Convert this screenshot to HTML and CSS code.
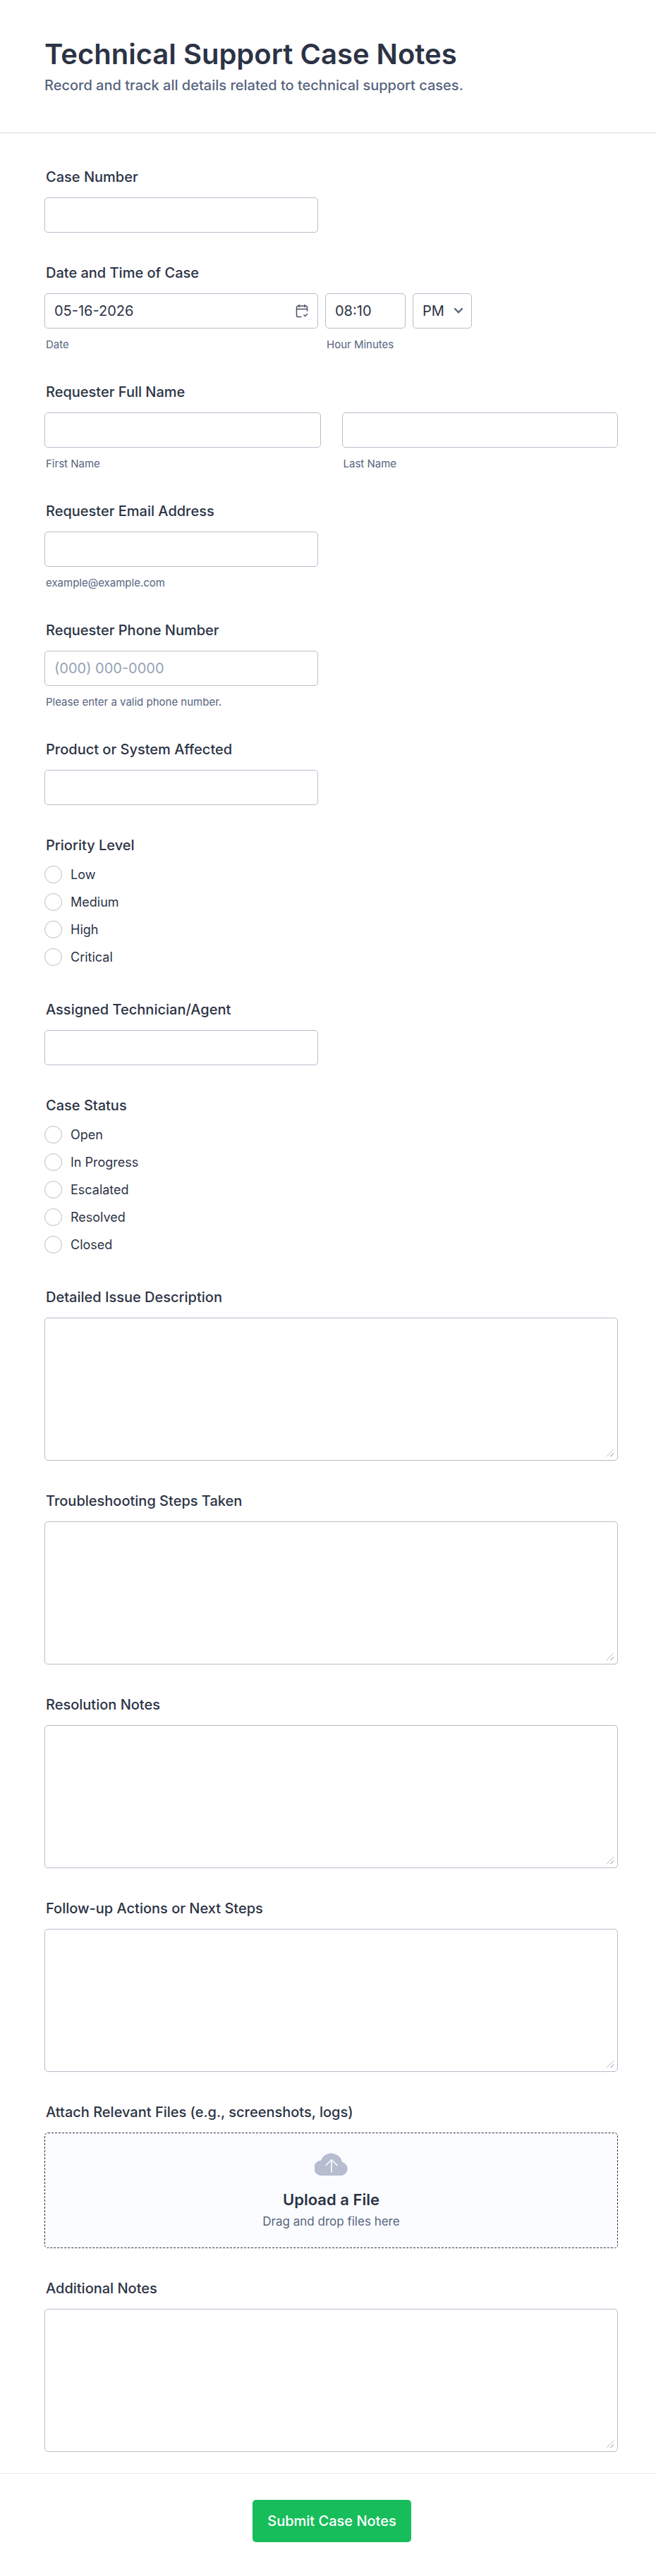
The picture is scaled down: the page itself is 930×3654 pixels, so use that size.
FILE: index.html
```html
<!DOCTYPE html>
<html lang="en">
<head>
<meta charset="utf-8">
<meta name="viewport" content="width=device-width, initial-scale=1">
<title>Technical Support Case Notes</title>
<link rel="stylesheet" href="styles.css">
</head>
<body>
<form class="form">
  <header class="form-header">
    <h1 class="form-title">Technical Support Case Notes</h1>
    <p class="form-subtitle">Record and track all details related to technical support cases.</p>
  </header>

  <main class="fields">
    <div class="field">
      <label class="label" for="case-number">Case Number</label>
      <input class="control half" id="case-number" type="text">
    </div>

    <div class="field" role="group" aria-labelledby="when">
      <span class="label" id="when">Date and Time of Case</span>
      <div class="row when-row">
        <div class="part half">
          <div class="with-icon">
            <input class="control" id="date" type="text" value="05-16-2026">
            <svg class="calendar-icon" viewBox="0 0 18 20" aria-hidden="true">
              <path d="M16.5 10.5V5a2 2 0 0 0-2-2h-11a2 2 0 0 0-2 2v11.500a2 2 0 0 0 2 2h5M1.500 7.500h15M5 1v4M13 1v4M11.500 15.500l2 2 3.500-3.500"/>
            </svg>
          </div>
          <label class="sublabel" for="date">Date</label>
        </div>
        <div class="part time">
          <input class="control" id="time" type="text" value="08:10">
          <label class="sublabel" for="time">Hour Minutes</label>
        </div>
        <div class="part ampm">
          <div class="with-icon">
            <select class="control select" aria-label="AM/PM Option">
              <option>AM</option>
              <option selected>PM</option>
            </select>
            <svg class="chevron-icon" viewBox="0 0 14 10" aria-hidden="true"><path d="M2 2l5 5 5-5"/></svg>
          </div>
        </div>
      </div>
    </div>

    <div class="field" role="group" aria-labelledby="full-name">
      <span class="label" id="full-name">Requester Full Name</span>
      <div class="row name-row">
        <div class="part">
          <input class="control" id="first" type="text">
          <label class="sublabel" for="first">First Name</label>
        </div>
        <div class="part">
          <input class="control" id="last" type="text">
          <label class="sublabel" for="last">Last Name</label>
        </div>
      </div>
    </div>

    <div class="field">
      <label class="label" for="email">Requester Email Address</label>
      <input class="control half" id="email" type="email" aria-describedby="email-hint">
      <span class="sublabel" id="email-hint">example@example.com</span>
    </div>

    <div class="field">
      <label class="label" for="phone">Requester Phone Number</label>
      <input class="control half" id="phone" type="tel" placeholder="(000) 000-0000" aria-describedby="phone-hint">
      <span class="sublabel" id="phone-hint">Please enter a valid phone number.</span>
    </div>

    <div class="field">
      <label class="label" for="product">Product or System Affected</label>
      <input class="control half" id="product" type="text">
    </div>

    <div class="field" role="radiogroup" aria-labelledby="priority">
      <span class="label" id="priority">Priority Level</span>
      <div class="options">
        <label class="option"><input class="radio" type="radio" name="priority">Low</label>
        <label class="option"><input class="radio" type="radio" name="priority">Medium</label>
        <label class="option"><input class="radio" type="radio" name="priority">High</label>
        <label class="option"><input class="radio" type="radio" name="priority">Critical</label>
      </div>
    </div>

    <div class="field">
      <label class="label" for="agent">Assigned Technician/Agent</label>
      <input class="control half" id="agent" type="text">
    </div>

    <div class="field" role="radiogroup" aria-labelledby="status">
      <span class="label" id="status">Case Status</span>
      <div class="options">
        <label class="option"><input class="radio" type="radio" name="status">Open</label>
        <label class="option"><input class="radio" type="radio" name="status">In Progress</label>
        <label class="option"><input class="radio" type="radio" name="status">Escalated</label>
        <label class="option"><input class="radio" type="radio" name="status">Resolved</label>
        <label class="option"><input class="radio" type="radio" name="status">Closed</label>
      </div>
    </div>

    <div class="field">
      <label class="label" for="issue">Detailed Issue Description</label>
      <textarea class="control area" id="issue"></textarea>
    </div>

    <div class="field">
      <label class="label" for="steps">Troubleshooting Steps Taken</label>
      <textarea class="control area" id="steps"></textarea>
    </div>

    <div class="field">
      <label class="label" for="resolution">Resolution Notes</label>
      <textarea class="control area" id="resolution"></textarea>
    </div>

    <div class="field">
      <label class="label" for="followup">Follow-up Actions or Next Steps</label>
      <textarea class="control area" id="followup"></textarea>
    </div>

    <div class="field">
      <span class="label" id="attach">Attach Relevant Files (e.g., screenshots, logs)</span>
      <label class="upload">
        <input class="upload-input" type="file" multiple aria-labelledby="attach">
        <svg class="cloud-icon" viewBox="0 0 48 33" aria-hidden="true">
          <path class="cloud" d="M10.500 33A10.500 10.500 0 0 1 8.700 11.700A16 16 0 0 1 39.300 14A9.700 9.700 0 0 1 38.500 33Z"/>
          <path class="arrow" d="M24 28V10.500M16 18.500l8-8 8 8"/>
        </svg>
        <span class="upload-title">Upload a File</span>
        <span class="upload-hint">Drag and drop files here</span>
      </label>
    </div>

    <div class="field">
      <label class="label" for="notes">Additional Notes</label>
      <textarea class="control area" id="notes"></textarea>
    </div>
  </main>

  <footer class="form-footer">
    <button class="submit" type="submit">Submit Case Notes</button>
  </footer>
</form>
</body>
</html>
```
FILE: styles.css
```css
* {
  box-sizing: border-box;
}

body {
  margin: 0;
  background: #fff;
  color: #2c3345;
  font-family: Inter, "Liberation Sans", sans-serif;
  font-size: 20px;
}

.form-header {
  display: flex;
  flex-direction: column;
  gap: 8px;
  padding: 53px 54px 55px 63px;
  border-bottom: 1px solid #d7d8e1;
}

.form-title {
  margin: 0;
  font-size: 40px;
  font-weight: 600;
  line-height: 48px;
}

.form-subtitle {
  margin: 0;
  color: #57647e;
  font-size: 20px;
  font-weight: 500;
  line-height: 24px;
}

.fields {
  display: flex;
  flex-direction: column;
  gap: 45px;
  padding: 50px 54px 30px 63px;
}

.field {
  display: flex;
  flex-direction: column;
}

.label {
  margin-bottom: 17px;
  padding-left: 2px;
  font-weight: 500;
  line-height: 24px;
}

.control {
  display: block;
  width: 100%;
  height: 50px;
  padding: 0 13px;
  border: 1px solid #b8bdc9;
  border-radius: 5px;
  background: #fff;
  color: #2c3345;
  font: inherit;
}

.control::placeholder {
  color: #95a3b4;
}

.half {
  width: 388px;
  max-width: 100%;
}

.area {
  height: 203px;
  padding: 12px 13px;
  resize: vertical;
}

.area::-webkit-resizer {
  background: linear-gradient(135deg, transparent 46%, #b8bdc9 46% 54%, transparent 54% 74%, #b8bdc9 74% 82%, transparent 82%) 0 0 / 10px 10px no-repeat;
}

.sublabel {
  margin-top: 13px;
  padding-left: 2px;
  color: #57647e;
  font-size: 15px;
  line-height: 20px;
}

.row {
  display: flex;
}

.when-row {
  gap: 10px;
}

.name-row {
  gap: 30px;
}

.part {
  display: flex;
  flex-direction: column;
}

.name-row .part {
  flex: 1;
}

.time {
  width: 114px;
}

.ampm {
  width: 84px;
}

.with-icon {
  position: relative;
}

.calendar-icon {
  position: absolute;
  top: 15px;
  right: 14px;
  width: 18px;
  height: 20px;
  fill: none;
  stroke: #4a4f63;
  stroke-width: 1.5;
}

.select {
  appearance: none;
}

.chevron-icon {
  position: absolute;
  top: 20px;
  right: 12px;
  width: 14px;
  height: 10px;
  fill: none;
  stroke: #57647e;
  stroke-width: 2.4;
  stroke-linecap: round;
  pointer-events: none;
}

.options {
  display: flex;
  flex-direction: column;
  gap: 14px;
  padding-bottom: 5px;
}

.option {
  display: flex;
  align-items: center;
  gap: 12px;
  font-size: 18px;
  line-height: 25px;
}

.radio {
  appearance: none;
  width: 25px;
  height: 25px;
  margin: 0;
  border: 1px solid #b8bdc9;
  border-radius: 50%;
  background: #fff;
}

.radio:checked {
  border: 8px solid #2e69ff;
}

.upload {
  display: flex;
  flex-direction: column;
  align-items: center;
  height: 164px;
  padding-top: 27px;
  border: 1px dashed #2c3345;
  border-radius: 5px;
  background: #fbfcff;
  cursor: pointer;
}

.upload-input {
  position: absolute;
  width: 1px;
  height: 1px;
  opacity: 0;
}

.cloud-icon {
  width: 48px;
  height: 33px;
}

.cloud {
  fill: #b5bdcf;
}

.arrow {
  fill: none;
  stroke: #fff;
  stroke-width: 1.6;
  stroke-linecap: round;
  stroke-linejoin: round;
}

.upload-title {
  margin-top: 20px;
  font-size: 22px;
  font-weight: 600;
  line-height: 28px;
}

.upload-hint {
  margin-top: 5px;
  color: #57647e;
  font-size: 17px;
  line-height: 24px;
}

.form-footer {
  display: flex;
  justify-content: center;
  padding: 37px 52px 48px 63px;
  border-top: 1px solid #e8e9f2;
}

.submit {
  height: 60px;
  padding: 0 21px;
  border: 0;
  border-radius: 5px;
  background: #18bd5b;
  color: #fff;
  font: inherit;
  font-weight: 500;
  cursor: pointer;
}
```
